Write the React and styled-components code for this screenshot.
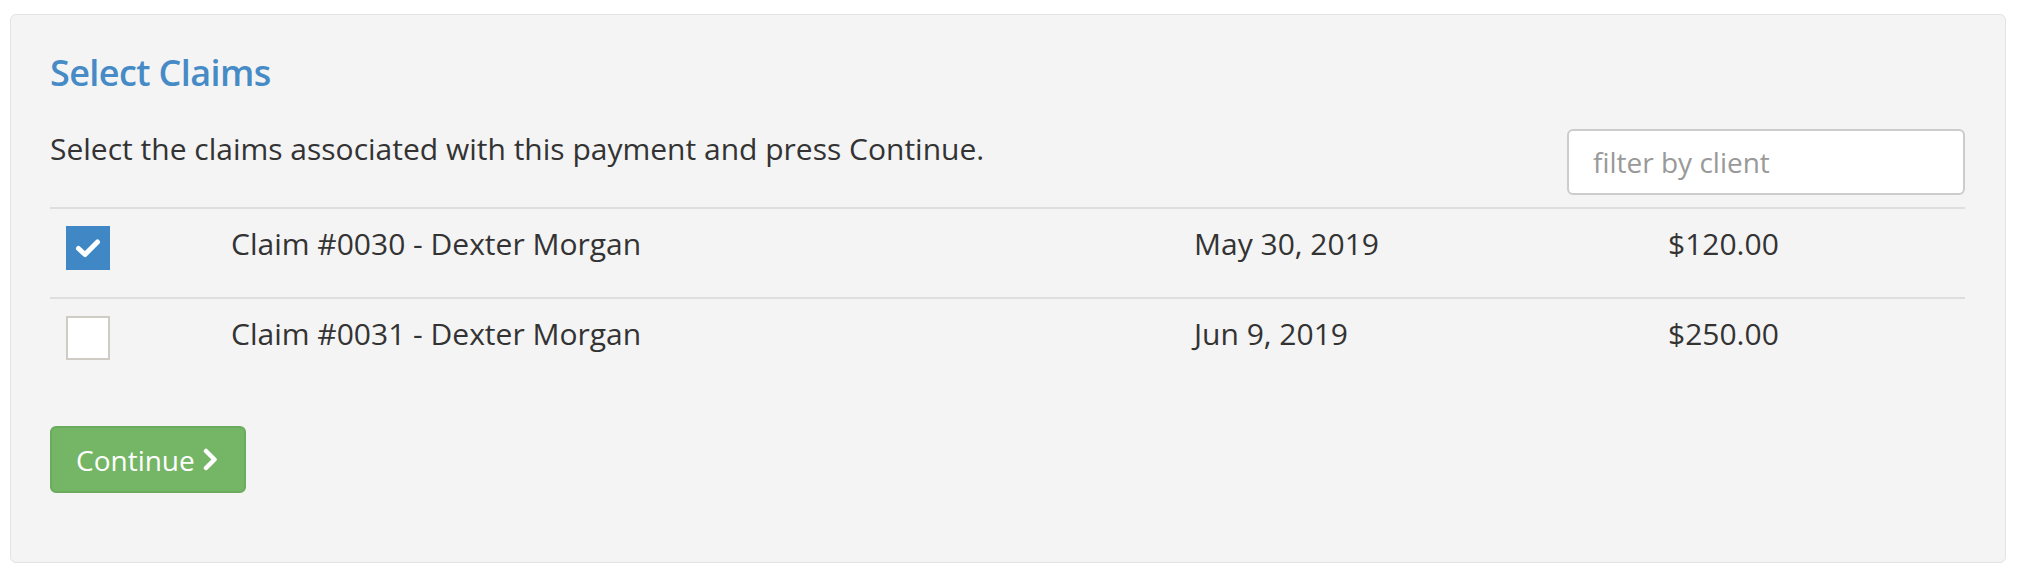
import React, { useState } from "react";
import styled, { createGlobalStyle } from "styled-components";

const GlobalStyle = createGlobalStyle`
  body {
    margin: 0;
    background: #ffffff;
    font-family: "Open Sans", "Noto Sans", sans-serif;
    color: #333333;
  }
`;

const Page = styled.div`
  padding: 14px 12px 13px 10px;
`;

const Well = styled.div`
  background-color: #f4f4f4;
  border: 1px solid #e3e3e3;
  border-radius: 6px;
  padding: 38px 40px 69px 39px;
`;

const Title = styled.h4`
  margin: 0;
  font-size: 36px;
  line-height: 40px;
  font-weight: 600;
  letter-spacing: -0.6px;
  color: #468bc6;
`;

const Toolbar = styled.div`
  display: flex;
  justify-content: space-between;
  align-items: flex-start;
  margin-top: 36px;
  margin-bottom: 12px;
`;

const Lead = styled.p`
  margin: 0;
  font-size: 30px;
  line-height: 40px;
`;

const Filter = styled.input`
  box-sizing: border-box;
  width: 398px;
  height: 66px;
  padding: 0 24px;
  border: 2px solid #cccccc;
  border-radius: 6px;
  background: #ffffff;
  font-family: inherit;
  font-size: 28px;
  color: #333333;
  outline: none;

  &::placeholder {
    color: #999999;
  }
`;

const Table = styled.div`
  display: flex;
  flex-direction: column;
`;

const Row = styled.div`
  display: grid;
  grid-template-columns: 165px 963px 474px 1fr;
  align-items: start;
  height: 90px;
  box-sizing: border-box;
  border-top: 2px solid #dedede;
`;

const Cell = styled.div`
  padding: 15px 16px 0 16px;
  font-size: 30px;
  line-height: 40px;
`;

const Box = styled.span`
  display: flex;
  align-items: center;
  justify-content: center;
  box-sizing: border-box;
  width: 44px;
  height: 44px;
  margin-top: 2px;
  cursor: pointer;
  background: ${(p) => (p.checked ? "#3f88c5" : "#ffffff")};
  border: 2px solid ${(p) => (p.checked ? "#3f88c5" : "#cfcbc5")};
`;

const Footer = styled.div`
  margin-top: 39px;
`;

const Button = styled.button`
  display: inline-flex;
  align-items: center;
  gap: 8px;
  box-sizing: border-box;
  height: 67px;
  padding: 0 26px 0 24px;
  border: 2px solid #6aab5e;
  border-radius: 6px;
  background-color: #74b566;
  color: #ffffff;
  font-family: inherit;
  font-size: 28px;
  cursor: pointer;
`;

const Check = () => (
  <svg width="26" height="20" viewBox="0 0 26 20">
    <polyline
      points="3.5,10.5 10,16.5 22.5,4"
      fill="none"
      stroke="#ffffff"
      strokeWidth="5"
      strokeLinecap="round"
      strokeLinejoin="round"
    />
  </svg>
);

const Chevron = () => (
  <svg width="15" height="23" viewBox="0 0 15 23">
    <polyline
      points="3,3 11.5,11.5 3,20"
      fill="none"
      stroke="#ffffff"
      strokeWidth="4.5"
      strokeLinecap="round"
      strokeLinejoin="round"
    />
  </svg>
);

const claims = [
  { id: "0030", client: "Dexter Morgan", date: "May 30, 2019", amount: "$120.00" },
  { id: "0031", client: "Dexter Morgan", date: "Jun 9, 2019", amount: "$250.00" },
];

export default function App() {
  const [selected, setSelected] = useState({ "0030": true });

  const toggle = (id) => setSelected((s) => ({ ...s, [id]: !s[id] }));

  return (
    <Page>
      <GlobalStyle />
      <Well>
        <Title>Select Claims</Title>
        <Toolbar>
          <Lead>Select the claims associated with this payment and press Continue.</Lead>
          <Filter placeholder="filter by client" />
        </Toolbar>
        <Table>
          {claims.map((c) => (
            <Row key={c.id}>
              <Cell>
                <Box checked={!!selected[c.id]} onClick={() => toggle(c.id)}>
                  {selected[c.id] && <Check />}
                </Box>
              </Cell>
              <Cell>
                Claim #{c.id} - {c.client}
              </Cell>
              <Cell>{c.date}</Cell>
              <Cell>{c.amount}</Cell>
            </Row>
          ))}
        </Table>
        <Footer>
          <Button>
            Continue <Chevron />
          </Button>
        </Footer>
      </Well>
    </Page>
  );
}
